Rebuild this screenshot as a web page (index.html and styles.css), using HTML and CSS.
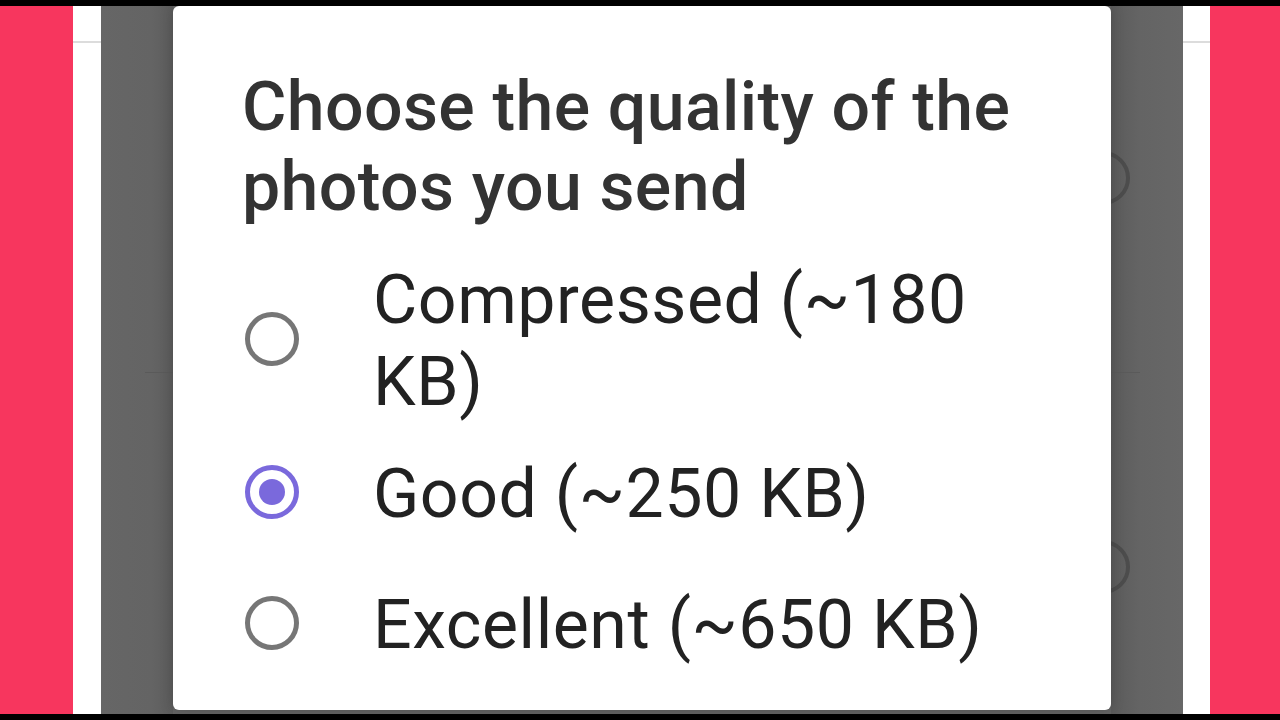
FILE: index.html
```html
<!DOCTYPE html>
<html>
<head>
<meta charset="utf-8">
<link rel="stylesheet" href="styles.css">
</head>
<body>
<div class="frame">
  <div class="bar-top"></div>
  <div class="row">
    <div class="pink pink-left"></div>
    <div class="strip strip-left"><div class="strip-line"></div></div>
    <div class="dim">
      <div class="side side-left">
        <div class="under-line under-line-left"></div>
      </div>
      <div class="dialog">
        <h1 class="title">Choose the quality of the photos you send</h1>
        <div class="options">
          <div class="option opt-1">
            <span class="radio"></span>
            <span class="label">Compressed (~180 KB)</span>
          </div>
          <div class="option opt-2">
            <span class="radio checked"><span class="dot"></span></span>
            <span class="label">Good (~250 KB)</span>
          </div>
          <div class="option opt-3">
            <span class="radio"></span>
            <span class="label">Excellent (~650 KB)</span>
          </div>
        </div>
      </div>
      <div class="side side-right">
        <div class="under-circle under-circle-1"></div>
        <div class="under-line under-line-right"></div>
        <div class="under-circle under-circle-2"></div>
      </div>
    </div>
    <div class="strip strip-right"><div class="strip-line"></div></div>
    <div class="pink pink-right"></div>
  </div>
  <div class="bar-bottom"></div>
</div>
</body>
</html>
```
FILE: styles.css
```css
* { box-sizing: border-box; }
html, body { margin: 0; padding: 0; }
body {
  background: #000;
  width: 1280px;
  height: 720px;
  overflow: hidden;
  font-family: Roboto, "Noto Sans", sans-serif;
}
.frame {
  display: flex;
  flex-direction: column;
  width: 1280px;
  height: 720px;
}
.bar-top { height: 6px; background: #000; flex: none; }
.bar-bottom { height: 6px; background: #000; flex: none; }
.row {
  display: flex;
  height: 708px;
  flex: none;
}
.pink { background: #f7365e; flex: none; }
.pink-left { width: 73px; }
.pink-right { width: 70px; }
.strip {
  background: #ffffff;
  flex: none;
  padding-top: 35px;
}
.strip-left { width: 28px; }
.strip-right { width: 27px; }
.strip-line { height: 2px; background: #dcdcdc; }
.dim {
  display: flex;
  width: 1082px;
  flex: none;
  background: #646464;
}
.side {
  width: 72px;
  flex: none;
  position: relative;
  z-index: 0;
}
.side-left {
  background: linear-gradient(to right, #666 0%, #646464 70%, #5c5c5c 100%);
}
.side-right {
  background: linear-gradient(to left, #676767 0%, #646464 60%, #5b5b5b 100%);
}
.under-line {
  position: absolute;
  top: 366px;
  height: 1px;
  background: #5a5a5a;
}
.under-line-left { left: 44px; right: 0; }
.under-line-right { left: 0; width: 29px; }
.under-circle {
  position: absolute;
  left: -35px;
  width: 54px;
  height: 54px;
  border-radius: 50%;
  border: 4px solid #4c4c4c;
}
.under-circle-1 { top: 145px; }
.under-circle-2 { top: 534px; }
.dialog {
  position: relative;
  z-index: 1;
  width: 938px;
  height: 704px;
  flex: none;
  background: #fff;
  border-radius: 6px;
  padding: 61px 50px 0 69px;
  box-shadow: 0 0 14px rgba(0, 0, 0, 0.18);
}
.title {
  margin: 0;
  font-size: 68px;
  line-height: 80px;
  font-weight: 500;
  color: #333333;
  letter-spacing: 0.4px;
}
.options {
  display: flex;
  flex-direction: column;
}
.option {
  display: flex;
  align-items: center;
}
.opt-1 { margin-top: 32px; }
.opt-2 { margin-top: 30px; }
.opt-3 { margin-top: 49px; }
.radio {
  flex: none;
  width: 54px;
  height: 54px;
  border-radius: 50%;
  border: 5px solid #767676;
  margin-left: 3px;
  margin-right: 74px;
  margin-bottom: 4px;
  display: flex;
  align-items: center;
  justify-content: center;
}
.radio.checked { border-color: #7a69dc; }
.dot {
  width: 26px;
  height: 26px;
  border-radius: 50%;
  background: #7a69dc;
}
.label {
  font-size: 68px;
  line-height: 82px;
  color: #222222;
  letter-spacing: 0.55px;
  max-width: 650px;
}
```
